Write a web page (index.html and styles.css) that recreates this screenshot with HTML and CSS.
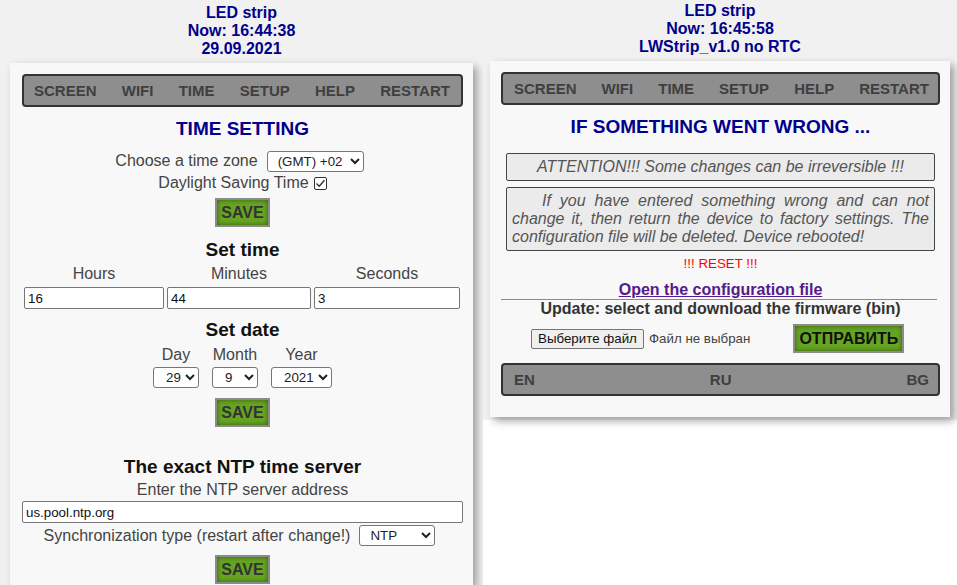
FILE: index.html
```html
<!DOCTYPE html>
<html>
<head>
<meta charset="utf-8">
<link rel="stylesheet" href="styles.css">
</head>
<body>
<div class="shot shot-left">
  <div class="head">LED strip<br>Now: 16:44:38<br>29.09.2021</div>
  <div class="panel panel-left">
    <nav class="menu"><span>SCREEN</span><span>WIFI</span><span>TIME</span><span>SETUP</span><span>HELP</span><span>RESTART</span></nav>
    <h3 class="title title-time">TIME SETTING</h3>
    <div class="row row-tz"><span>Choose a time zone</span><select class="sel sel-tz"><option>(GMT) +02</option></select></div>
    <div class="row row-dst"><span>Daylight Saving Time</span><span class="check"><svg width="13" height="13" viewBox="0 0 13 13"><path d="M2.5 6.5 L5.2 9.2 L10.5 3.2" fill="none" stroke="#333" stroke-width="1.4"/></svg></span></div>
    <div class="btn-row btn-row-1"><button class="save">SAVE</button></div>
    <h4 class="sub sub-time">Set time</h4>
    <div class="time-grid">
      <span class="lbl">Hours</span><span class="lbl">Minutes</span><span class="lbl">Seconds</span>
      <input class="field" value="16"><input class="field" value="44"><input class="field" value="3">
    </div>
    <h4 class="sub sub-date">Set date</h4>
    <div class="date-grid">
      <span class="lbl">Day</span><span class="lbl">Month</span><span class="lbl">Year</span>
      <select class="sel"><option>29</option></select><select class="sel"><option>9</option></select><select class="sel"><option>2021</option></select>
    </div>
    <div class="btn-row btn-row-2"><button class="save">SAVE</button></div>
    <h4 class="sub sub-ntp">The exact NTP time server</h4>
    <div class="line line-ntp">Enter the NTP server address</div>
    <input class="field field-ntp" value="us.pool.ntp.org">
    <div class="row row-sync"><span>Synchronization type (restart after change!)</span><select class="sel sel-sync"><option>NTP</option></select></div>
    <div class="btn-row btn-row-3"><button class="save">SAVE</button></div>
  </div>
</div>
<div class="shot shot-right">
  <div class="head">LED strip<br>Now: 16:45:58<br>LWStrip_v1.0 no RTC</div>
  <div class="panel panel-right">
    <nav class="menu menu-right"><span>SCREEN</span><span>WIFI</span><span>TIME</span><span>SETUP</span><span>HELP</span><span>RESTART</span></nav>
    <h3 class="title title-wrong">IF SOMETHING WENT WRONG ...</h3>
    <div class="note note-1">ATTENTION!!! Some changes can be irreversible !!!</div>
    <div class="note note-2">If you have entered something wrong and can not change it, then return the device to factory settings. The configuration file will be deleted. Device rebooted!</div>
    <div class="reset">!!! RESET !!!</div>
    <div class="link-row"><a class="cfg-link" href="#">Open the configuration file</a></div>
    <hr class="sep">
    <div class="update">Update: select and download the firmware (bin)</div>
    <div class="file-row">
      <button class="file-btn">Выберите файл</button>
      <span class="file-name">Файл не выбран</span>
      <button class="send">ОТПРАВИТЬ</button>
    </div>
    <nav class="menu menu-right lang"><span>EN</span><span>RU</span><span>BG</span></nav>
  </div>
</div>
</body>
</html>
```
FILE: styles.css
```css
* { box-sizing: border-box; }
html, body { margin: 0; padding: 0; height: 585px; overflow: hidden; }
body {
  display: flex;
  align-items: flex-start;
  width: 957px;
  background: #ffffff;
  font-family: "Liberation Sans", Arial, sans-serif;
  color: #444;
}
.shot { background: #f1f1f1; }
.shot-left { width: 483px; height: 585px; padding-top: 4px; position: relative; z-index: 1; overflow: hidden; }
.shot-right { width: 474px; height: 420px; padding-top: 2px; }
.head {
  text-align: center;
  font-weight: bold;
  font-size: 16px;
  line-height: 18px;
  color: #00008b;
}
.panel { background: #f8f8f8; box-shadow: 4px 4px 8px rgba(0,0,0,0.35); }
.panel-left { margin: 5px 0 0 10px; width: 463px; height: 522px; padding: 11px 10px 0 12px; overflow: hidden; }
.panel-right { margin: 5px 0 0 7px; width: 460px; height: 356px; padding: 11px 10px 0 11px; }
.menu {
  display: flex;
  justify-content: space-between;
  align-items: center;
  height: 33px;
  border: 2px solid #333;
  border-radius: 4px;
  background: #8e8e8e;
  padding: 0 11px 0 10px;
  font-weight: bold;
  font-size: 15px;
  color: #3f3f3f;
}
.menu-right { padding: 0 9px 0 11px; }
.title {
  margin: 11px 0 0;
  text-align: center;
  font-size: 19px;
  line-height: 22px;
  color: #00008b;
}
.row {
  display: flex;
  justify-content: center;
  align-items: center;
  font-size: 16px;
  color: #444;
}
.row-tz { margin-top: 10px; height: 22px; gap: 9px; padding-right: 6px; }
.row-dst { margin-top: 1px; height: 20px; gap: 5px; }
.check {
  display: inline-flex;
  width: 13px;
  height: 13px;
  border: 1px solid #333;
  border-radius: 2px;
  background: #fff;
  align-items: center;
  justify-content: center;
}
.check svg { display: block; margin: -1px; }
.sel {
  height: 21px;
  font-family: "Liberation Sans", Arial, sans-serif;
  font-size: 13.33px;
  color: #222;
  background: #fff;
  border: 1px solid #767676;
  border-radius: 3px;
  padding: 0 0 0 6px;
}
.sel-tz { width: 97px; }
.sel-sync { width: 76px; }
.btn-row { display: flex; justify-content: center; }
.btn-row-1 { margin-top: 5px; }
.btn-row-2 { margin-top: 10px; }
.btn-row-3 { margin-top: 9px; }
.save, .send {
  height: 29px;
  padding: 0 4px;
  border: 2px solid #8b8b8b;
  background: #66a522;
  box-shadow: inset 0 0 5px rgba(0,0,0,0.45);
  font-family: "Liberation Sans", Arial, sans-serif;
  font-weight: bold;
  font-size: 16px;
  color: #333;
}
.sub {
  margin: 0;
  text-align: center;
  font-size: 19px;
  line-height: 22px;
  color: #111;
}
.sub-time { margin-top: 12px; }
.sub-date { margin-top: 10px; }
.sub-ntp { margin-top: 29px; }
.lbl { text-align: center; font-size: 16px; line-height: 18px; color: #444; }
.time-grid {
  display: grid;
  grid-template-columns: 140px 144px 146px;
  column-gap: 3px;
  row-gap: 4px;
  margin: 4px 0 0 2px;
}
.field {
  height: 22px;
  width: 100%;
  border: 1px solid #767676;
  border-radius: 2px;
  background: #fff;
  padding: 1px 3px;
  font-family: "Liberation Sans", Arial, sans-serif;
  font-size: 13.33px;
  color: #111;
}
.date-grid {
  display: grid;
  grid-template-columns: 46px 46px 61px;
  justify-content: center;
  column-gap: 13px;
  row-gap: 3px;
  margin-top: 5px;
}
.date-grid .sel { width: 100%; padding-left: 8px; }
.line { text-align: center; font-size: 16px; line-height: 18px; color: #444; }
.line-ntp { margin-top: 3px; }
.field-ntp { margin-top: 2px; }
.row-sync { margin-top: 2px; height: 21px; gap: 9px; padding-right: 6px; }
.note {
  margin: 0 5px;
  border: 1px solid #444;
  border-radius: 2px;
  background: #ebebeb;
  font-style: italic;
  font-size: 16px;
  line-height: 18px;
  color: #555;
}
.note-1 { margin-top: 15px; padding: 4px 5px; text-align: center; }
.note-2 { margin-top: 6px; padding: 4px 5px; text-align: justify; text-indent: 30px; }
.reset {
  margin-top: 5px;
  text-align: center;
  font-size: 13.33px;
  line-height: 16px;
  color: #ff0000;
}
.link-row { margin-top: 9px; text-align: center; line-height: 18px; }
.cfg-link { font-weight: bold; font-size: 16px; color: #551a8b; text-decoration: underline; }
.sep { margin: 0 3px 0 0; border: 0; border-top: 1px solid #8a8a8a; height: 0; }
.update {
  text-align: center;
  font-weight: bold;
  font-size: 16px;
  line-height: 18px;
  color: #333;
}
.file-row {
  display: flex;
  align-items: center;
  height: 29px;
  margin-top: 6px;
  padding-left: 30px;
}
.file-btn {
  height: 20px;
  padding: 0 6px;
  border: 1px solid #767676;
  border-radius: 2px;
  background: #efefef;
  font-family: "Liberation Sans", Arial, sans-serif;
  font-size: 13.33px;
  color: #111;
}
.file-name { margin-left: 5px; font-size: 13.33px; color: #444; }
.send { margin-left: 43px; color: #111; width: 111px; }
.lang { margin-top: 10px; }
```
